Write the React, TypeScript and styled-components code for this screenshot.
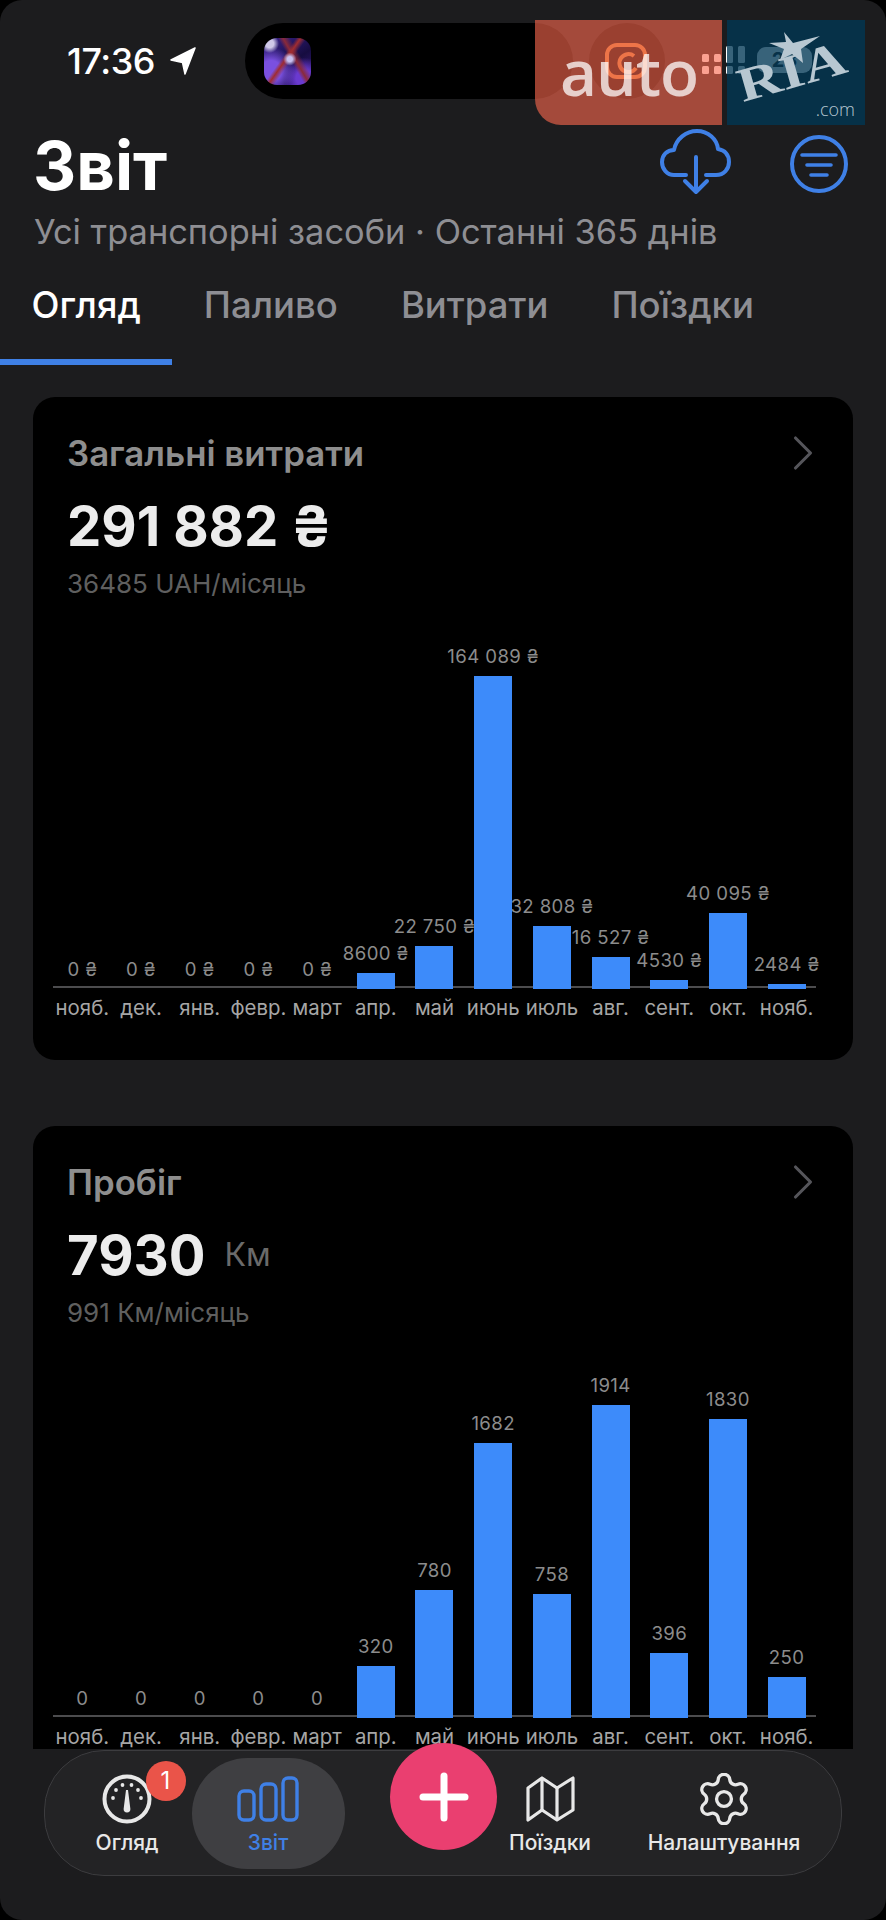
import React, { FC } from 'react';
import styled, { createGlobalStyle } from 'styled-components';
import { ChevronRight, Settings } from 'lucide-react';

const GlobalStyle = createGlobalStyle`
    html, body {
        margin: 0;
        padding: 0;
        background: #000;
    }
    * {
        box-sizing: border-box;
    }
`;

const BLUE = '#3f80e6';

const Screen = styled.div`
    position: relative;
    width: 886px;
    height: 1920px;
    display: flex;
    flex-direction: column;
    background: #1c1c1e;
    border-radius: 22px;
    overflow: hidden;
    font-family: Inter, "Noto Sans", sans-serif;
    color: #fff;
`;

const StatusBar = styled.div`
    height: 125px;
    flex: none;
    display: flex;
    align-items: flex-start;
    padding: 23px 0 0 67px;
`;

const Time = styled.div`
    width: 91px;
    height: 76px;
    line-height: 76px;
    font-size: 36px;
    font-weight: 500;
    letter-spacing: -0.5px;
    white-space: nowrap;
`;

const LocationArrow = styled.svg`
    width: 26px;
    height: 28px;
    margin: 24px 0 0 12px;
`;

const Island = styled.div`
    width: 328px;
    height: 76px;
    margin-left: 49px;
    padding: 15px 0 0 19px;
    background: #000;
    border-radius: 38px;
`;

const IslandThumb = styled.div`
    width: 47px;
    height: 47px;
    border-radius: 13px;
    background:
        radial-gradient(circle at 55% 45%, #c8c0f0 0 7%, transparent 18%),
        radial-gradient(circle at 12% 12%, #cfc8e8 0 7%, transparent 16%),
        linear-gradient(125deg, transparent 40%, #a02c30 46%, transparent 54%),
        linear-gradient(60deg, transparent 55%, #8a2a3a 62%, transparent 72%),
        radial-gradient(circle at 15% 70%, #7a50e0 0 20%, transparent 46%),
        radial-gradient(circle at 85% 85%, #6a3ad0 0 14%, transparent 36%),
        linear-gradient(145deg, #3a2490, #160c40 55%, #3c1c88);
`;

const IslandCircle = styled.div`
    width: 76px;
    height: 76px;
    margin-left: 16px;
    display: flex;
    align-items: center;
    justify-content: center;
    background: #000;
    border-radius: 50%;
`;

const Signal = styled.svg`
    width: 44px;
    height: 30px;
    margin: 22px 0 0 37px;
`;

const Battery = styled.div`
    width: 55px;
    height: 26px;
    margin: 24px 0 0 11px;
    border-radius: 9px;
    background: #fff;
    color: #222;
    font-size: 20px;
    font-weight: 700;
    line-height: 26px;
    text-align: center;
`;

const Watermark = styled.div`
    position: absolute;
    top: 20px;
    left: 535px;
    display: flex;
    gap: 5px;
    height: 105px;
`;

const AutoMark = styled.div`
    width: 187px;
    padding: 14px 0 0 1px;
    text-align: center;
    background: rgba(248, 103, 77, 0.62);
    border-bottom-left-radius: 26px;
    color: rgba(255, 255, 255, 0.74);
    font-family: "Open Sans", sans-serif;
    font-size: 64px;
    font-weight: 600;
    line-height: 76px;
    letter-spacing: -1px;
`;

const RiaMark = styled.div`
    position: relative;
    width: 138px;
    background: rgba(0, 55, 85, 0.78);
    color: #b7c7d1;
`;

const RiaStar = styled.svg`
    position: absolute;
    top: 12px;
    left: 42px;
    width: 52px;
    height: 32px;
`;

const RiaName = styled.div`
    position: absolute;
    top: 42px;
    left: 18px;
    font-family: "Liberation Serif", serif;
    font-size: 48px;
    font-weight: 700;
    line-height: 48px;
    transform: rotate(-16deg) scaleX(1.26);
    transform-origin: 0 100%;
`;

const RiaCom = styled.div`
    position: absolute;
    right: 10px;
    bottom: 4px;
    font-family: "Open Sans", sans-serif;
    font-size: 18px;
    font-weight: 300;
    line-height: 24px;
`;

const Head = styled.div`
    height: 75px;
    flex: none;
    display: flex;
    justify-content: space-between;
    padding: 0 38px 0 33px;
`;

const Title = styled.h1`
    margin: 0;
    font-size: 67px;
    font-weight: 700;
    line-height: 82px;
`;

const HeadActions = styled.div`
    display: flex;
    gap: 59px;
    padding-top: 4px;
`;

const CloudIcon = styled.svg`
    width: 71px;
    height: 66px;
`;

const FilterIcon = styled.svg`
    width: 58px;
    height: 58px;
    margin-top: 6px;
`;

const Subtitle = styled.div`
    height: 40px;
    flex: none;
    margin-top: 12px;
    padding-left: 34px;
    color: #8e8e93;
    font-size: 34.4px;
    line-height: 40px;
    white-space: nowrap;
`;

const Tabs = styled.div`
    display: flex;
    flex: none;
    margin-top: 18px;
`;

const Tab = styled.div<{ $active?: boolean }>`
    height: 95px;
    padding: 0 31.5px;
    color: ${p => (p.$active ? '#fff' : '#8e8e93')};
    border-bottom: 6px solid ${p => (p.$active ? BLUE : 'transparent')};
    font-size: 36.5px;
    font-weight: 500;
    line-height: 70px;
    white-space: nowrap;
`;

const Main = styled.div`
    flex: 1;
    min-height: 0;
    overflow: hidden;
    padding: 32px 33px 0;
    display: flex;
    flex-direction: column;
    gap: 66px;
`;

const Card = styled.section`
    flex: none;
    height: 663px;
    padding: 36px 37px 0 20px;
    background: #000;
    border-radius: 22px;
`;

const CardHead = styled.div`
    display: flex;
    justify-content: space-between;
    align-items: center;
    height: 40px;
    padding-left: 14px;
    margin-right: -17px;
    color: #8e8e8e;
    font-size: 34.8px;
    font-weight: 600;
    line-height: 38px;
`;

const Chevron = styled(ChevronRight)`
    flex: none;
    color: #55555a;
`;

const Total = styled.div`
    display: flex;
    align-items: baseline;
    gap: 19px;
    height: 64px;
    margin-top: 21px;
    padding-left: 14px;
    color: #ececec;
    font-size: 54.5px;
    font-weight: 700;
    line-height: 64px;
    white-space: nowrap;
`;

const TotalUnit = styled.span`
    align-self: center;
    color: #6a6a6a;
    font-size: 32px;
    font-weight: 400;
`;

const PerMonth = styled.div`
    height: 32px;
    margin-top: 10px;
    padding-left: 14px;
    color: #5f5f5f;
    font-size: 26px;
    line-height: 32px;
`;

const Plot = styled.div`
    display: grid;
    grid-template-columns: repeat(13, minmax(0, 1fr));
    align-items: end;
    height: 343px;
    margin-top: 45px;
    border-bottom: 2px solid #4c4c4e;
`;

const Column = styled.div`
    display: flex;
    flex-direction: column;
    align-items: center;
    min-width: 0;
`;

const Value = styled.div`
    margin-bottom: 9px;
    color: #8c8c8c;
    font-size: 18.6px;
    line-height: 22px;
    letter-spacing: 0.4px;
    white-space: nowrap;
`;

const Bar = styled.div`
    position: relative;
    z-index: 1;
    width: 38px;
    background: #3d8bfa;
`;

const Months = styled.div`
    display: grid;
    grid-template-columns: repeat(13, minmax(0, 1fr));
    margin-top: 7px;
`;

const Month = styled.div`
    display: flex;
    justify-content: center;
    min-width: 0;
    color: #a6a6a6;
    font-size: 20.4px;
    line-height: 26px;
    white-space: nowrap;
`;

const TabBar = styled.nav`
    position: relative;
    flex: none;
    display: flex;
    align-items: center;
    height: 126px;
    margin: 1px 44px 44px;
    padding-left: 17.5px;
    background: #232325;
    border: 1.5px solid #3c3c3f;
    border-radius: 60px;
`;

const NavItem = styled.div<{ $width: number; $active?: boolean; $gap?: number }>`
    position: relative;
    flex: none;
    width: ${p => p.$width}px;
    height: 111px;
    margin-left: ${p => p.$gap || 0}px;
    padding-top: 16px;
    display: flex;
    flex-direction: column;
    align-items: center;
    background: ${p => (p.$active ? '#3f3f42' : 'transparent')};
    border-radius: 56px;
    color: ${p => (p.$active ? BLUE : '#e8e8e8')};
`;

const NavIcon = styled.div`
    height: 50px;
    display: flex;
    align-items: center;
    justify-content: center;
`;

const NavLabel = styled.div`
    margin-top: 7px;
    font-size: 21px;
    font-weight: 500;
    line-height: 24px;
    white-space: nowrap;
`;

const Badge = styled.div`
    position: absolute;
    top: 3px;
    left: 83px;
    width: 40px;
    height: 40px;
    background: #ea5449;
    border-radius: 50%;
    color: #fff;
    font-size: 24px;
    line-height: 40px;
    text-align: center;
`;

const Fab = styled.div`
    position: absolute;
    top: -8px;
    left: 345px;
    width: 107px;
    height: 107px;
    display: flex;
    align-items: center;
    justify-content: center;
    background: #ea3f70;
    border-radius: 50%;
`;

type Item = { month: string; value: number };

const months = ['нояб.', 'дек.', 'янв.', 'февр.', 'март', 'апр.', 'май', 'июнь', 'июль', 'авг.', 'сент.', 'окт.', 'нояб.'];

const toItems = (values: number[]): Item[] => values.map((value, i) => ({ month: months[i], value }));

const spend = toItems([0, 0, 0, 0, 0, 8600, 22750, 164089, 32808, 16527, 4530, 40095, 2484]);
const mileage = toItems([0, 0, 0, 0, 0, 320, 780, 1682, 758, 1914, 396, 1830, 250]);

const formatSpend = (n: number) =>
    (n >= 10000 ? n.toLocaleString('ru-RU').replace(/\s/g, ' ') : String(n)) + ' ₴';

const Chart: FC<{ items: Item[]; format: (n: number) => string }> = ({ items, format }) => {
    const max = Math.max(...items.map(i => i.value));
    return (
        <>
            <Plot>
                {items.map((item, i) => (
                    <Column key={i}>
                        <Value>{format(item.value)}</Value>
                        {item.value > 0 && <Bar style={{ height: Math.round((item.value / max) * 313) }} />}
                    </Column>
                ))}
            </Plot>
            <Months>
                {items.map((item, i) => (
                    <Month key={i}>{item.month}</Month>
                ))}
            </Months>
        </>
    );
};

const Gauge = () => (
    <svg width="50" height="50" viewBox="0 0 50 50" fill="none">
        <circle cx="25" cy="25" r="22.5" stroke="currentColor" strokeWidth="4" />
        <g fill="currentColor">
            <circle cx="11" cy="24" r="1.9" />
            <circle cx="14" cy="16" r="1.9" />
            <circle cx="20.5" cy="11" r="1.9" />
            <circle cx="29.5" cy="11" r="1.9" />
            <circle cx="36" cy="16" r="1.9" />
            <circle cx="39" cy="24" r="1.9" />
            <path d="M24 16h2l2.4 19a3.4 3.4 0 0 1-6.8 0z" />
        </g>
    </svg>
);

const BarsIcon = () => (
    <svg width="62" height="46" viewBox="0 0 62 46" fill="none" stroke="currentColor" strokeWidth="3.4">
        <rect x="2" y="15" width="15" height="29" rx="5" />
        <rect x="24" y="8" width="15" height="36" rx="5" />
        <rect x="46" y="2" width="14" height="42" rx="5" />
    </svg>
);

const MapIcon = () => (
    <svg width="49" height="46" viewBox="0 0 49 46" fill="none" stroke="currentColor" strokeWidth="3.2" strokeLinejoin="round">
        <path d="M2 12 16 2l15 10L47 2v32L31 44 16 34 2 44z" />
        <path d="M16 2v32M31 12v32" />
    </svg>
);

export default function App() {
    return (
        <Screen>
            <GlobalStyle />
            <StatusBar>
                <Time>17:36</Time>
                <LocationArrow viewBox="0 0 26 28">
                    <path d="M25 1 1 13l11.5 2.5L15 27z" fill="#fff" stroke="#fff" strokeWidth="1.5" strokeLinejoin="round" />
                </LocationArrow>
                <Island>
                    <IslandThumb />
                </Island>
                <IslandCircle>
                    <svg width="46" height="38" viewBox="0 0 46 38" fill="none" stroke="#d98a3f" strokeWidth="4">
                        <rect x="3" y="3" width="38" height="32" rx="10" />
                        <path d="M30 14a9 9 0 1 0 2 12" />
                    </svg>
                </IslandCircle>
                <Signal viewBox="0 0 44 30" fill="#fff">
                    <rect x="0" y="9" width="7" height="8" rx="1.5" />
                    <rect x="0" y="21" width="7" height="8" rx="1.5" />
                    <rect x="12" y="9" width="7" height="8" rx="1.5" />
                    <rect x="12" y="21" width="7" height="8" rx="1.5" />
                    <rect x="24" y="1" width="7" height="17" rx="1.5" />
                    <rect x="24" y="21" width="7" height="8" rx="1.5" />
                    <rect x="36" y="1" width="7" height="17" rx="1.5" />
                    <rect x="36" y="21" width="7" height="8" rx="1.5" />
                </Signal>
                <Battery>23</Battery>
            </StatusBar>

            <Watermark>
                <AutoMark>auto</AutoMark>
                <RiaMark>
                    <RiaStar viewBox="0 0 52 32">
                        <path d="M15 0l9 11L51 4 32 17l2 14-11-9-12 6 4-11L0 11l17-1z" fill="#b7c7d1" />
                    </RiaStar>
                    <RiaName>RIA</RiaName>
                    <RiaCom>.com</RiaCom>
                </RiaMark>
            </Watermark>

            <Head>
                <Title>Звіт</Title>
                <HeadActions>
                    <CloudIcon viewBox="0 0 71 66" fill="none" stroke={BLUE} strokeWidth="4" strokeLinecap="round" strokeLinejoin="round">
                        <path d="M26 46H14C7 46 2 40 2 33s5-12 12-12c2-11 12-19 23-19s20 8 21 18c7 1 11 6 11 13s-5 13-13 13H46" />
                        <path d="M36 28v35M25 52l11 11 11-11" />
                    </CloudIcon>
                    <FilterIcon viewBox="0 0 58 58" fill="none" stroke={BLUE} strokeLinecap="round">
                        <circle cx="29" cy="29" r="27" strokeWidth="4" />
                        <path d="M12 20h34M17 30h24M21 40h16" strokeWidth="3.6" />
                    </FilterIcon>
                </HeadActions>
            </Head>
            <Subtitle>Усі транспорні засоби · Останні 365 днів</Subtitle>
            <Tabs>
                <Tab $active>Огляд</Tab>
                <Tab>Паливо</Tab>
                <Tab>Витрати</Tab>
                <Tab>Поїздки</Tab>
            </Tabs>

            <Main>
                <Card>
                    <CardHead>
                        Загальні витрати
                        <Chevron size={60} strokeWidth={1.25} />
                    </CardHead>
                    <Total>291 882 ₴</Total>
                    <PerMonth>36485 UAH/місяць</PerMonth>
                    <Chart items={spend} format={formatSpend} />
                </Card>
                <Card>
                    <CardHead>
                        Пробіг
                        <Chevron size={60} strokeWidth={1.25} />
                    </CardHead>
                    <Total>
                        7930 <TotalUnit>Км</TotalUnit>
                    </Total>
                    <PerMonth>991 Км/місяць</PerMonth>
                    <Chart items={mileage} format={String} />
                </Card>
            </Main>

            <TabBar>
                <NavItem $width={129}>
                    <NavIcon>
                        <Gauge />
                    </NavIcon>
                    <NavLabel>Огляд</NavLabel>
                    <Badge>1</Badge>
                </NavItem>
                <NavItem $width={153} $active>
                    <NavIcon>
                        <BarsIcon />
                    </NavIcon>
                    <NavLabel>Звіт</NavLabel>
                </NavItem>
                <NavItem $width={100} $gap={155.5}>
                    <NavIcon>
                        <MapIcon />
                    </NavIcon>
                    <NavLabel>Поїздки</NavLabel>
                </NavItem>
                <NavItem $width={180} $gap={34}>
                    <NavIcon>
                        <Settings size={52} viewBox="1.5 1.5 21 21" strokeWidth={1.35} />
                    </NavIcon>
                    <NavLabel>Налаштування</NavLabel>
                </NavItem>
                <Fab>
                    <svg width="50" height="50" viewBox="0 0 50 50" stroke="#fff" strokeWidth="7" strokeLinecap="round">
                        <path d="M25 4v42M4 25h42" />
                    </svg>
                </Fab>
            </TabBar>
        </Screen>
    );
}
